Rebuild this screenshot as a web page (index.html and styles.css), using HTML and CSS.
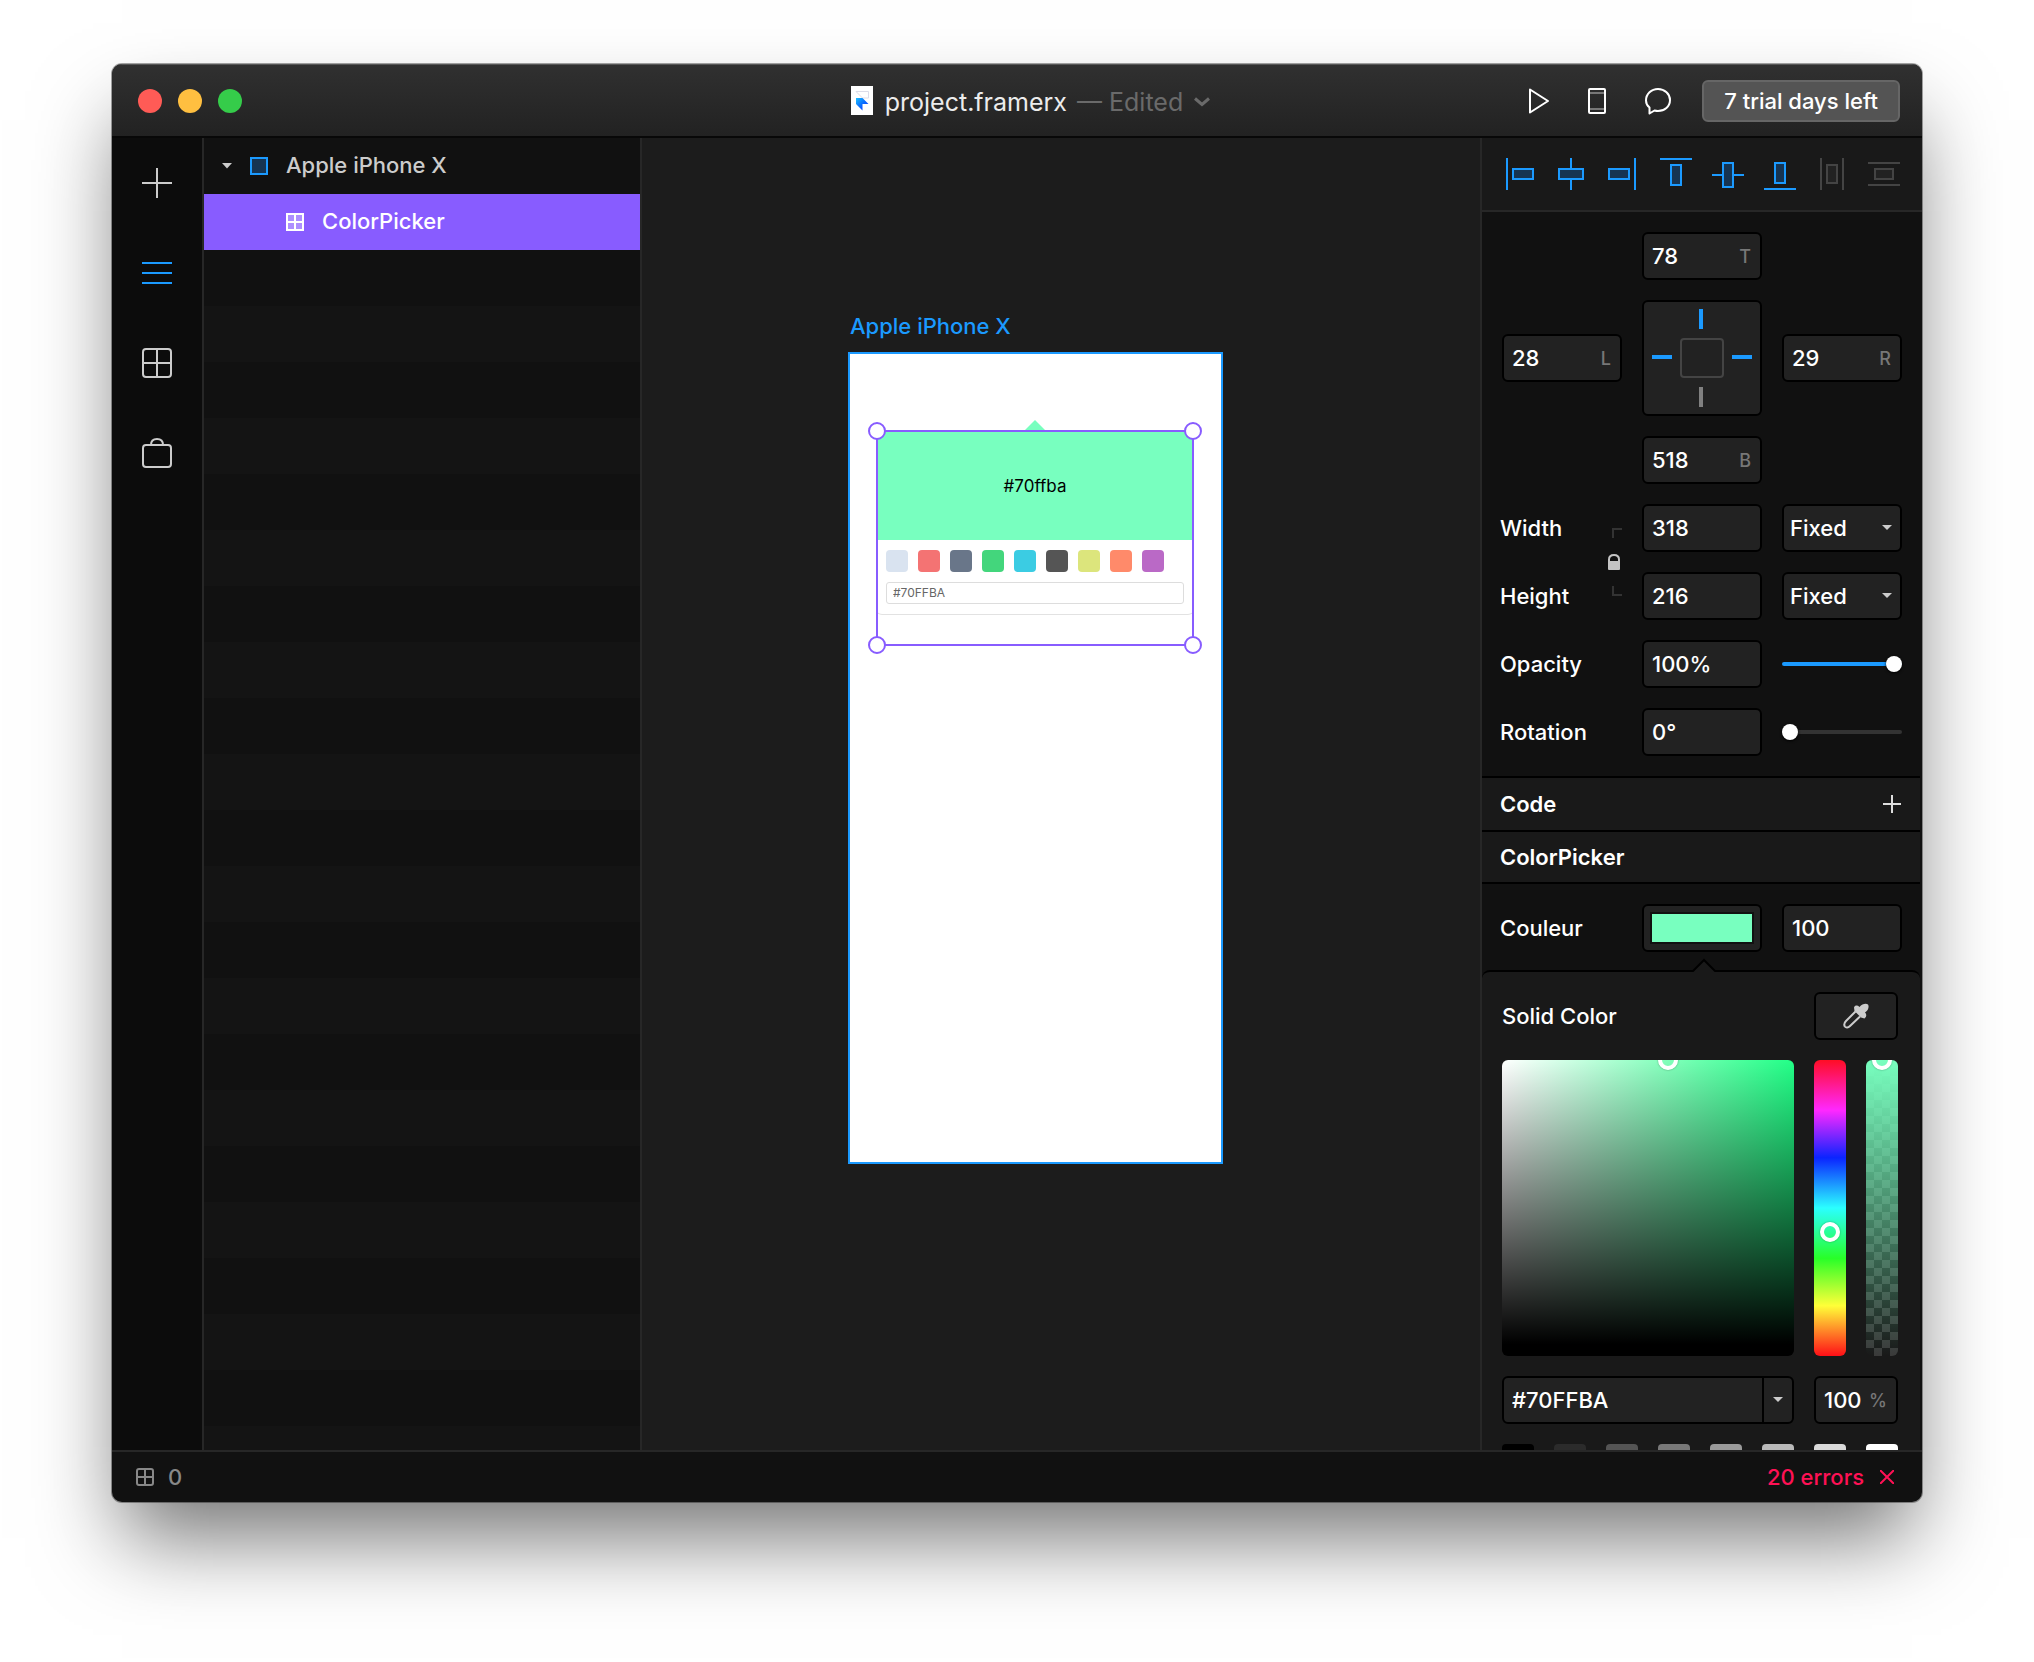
FILE: index.html
```html
<!DOCTYPE html>
<html lang="en">
<head>
<meta charset="utf-8">
<title>project.framerx</title>
<link rel="stylesheet" href="styles.css">
</head>
<body>
<div class="window">
  <header class="titlebar">
    <div class="traffic">
      <button class="light light-close" aria-label="Close"></button>
      <button class="light light-min" aria-label="Minimize"></button>
      <button class="light light-max" aria-label="Zoom"></button>
    </div>
    <div class="doc">
      <svg class="doc-icon" width="22" height="29" viewBox="0 0 22 29" aria-hidden="true">
        <defs><linearGradient id="doc-blue" x1="0" y1="0" x2="1" y2="1"><stop offset="0" stop-color="#1cc0ff"/><stop offset="0.5" stop-color="#0a6cff"/><stop offset="1" stop-color="#1a2cff"/></linearGradient></defs>
        <rect width="22" height="29" fill="#fff"/>
        <path d="M5 5.500H17.500V12H11.500Z" fill="#fff" stroke="#dcdce8"/>
        <path d="M5 12H11.500L17.500 18H11.500V24.500L5 18Z" fill="url(#doc-blue)"/>
      </svg>
      <h1 class="doc-name">project.framerx</h1>
      <button class="doc-state">— Edited
        <svg width="18" height="10" viewBox="0 0 18 10" fill="none" stroke="currentColor" stroke-width="3" aria-hidden="true"><path d="M2 1.500L9 7.500L16 1.500"/></svg>
      </button>
    </div>
    <div class="actions">
      <button class="icon-btn" aria-label="Preview"><svg width="22" height="28" viewBox="0 0 22 28" fill="none" stroke="#fff" stroke-width="2" stroke-linejoin="round"><path d="M2 2.500L20 14L2 25.500Z"/></svg></button>
      <button class="icon-btn" aria-label="Device"><svg width="18" height="28" viewBox="0 0 18 28" fill="none"><path d="M2 6H16M2 22H16" stroke="#777" stroke-width="2"/><rect x="1" y="2" width="16" height="24" rx="1" stroke="#fff" stroke-width="2"/></svg></button>
      <button class="icon-btn" aria-label="Comments"><svg width="28" height="28" viewBox="0 0 28 28" fill="none" stroke="#fff" stroke-width="2" stroke-linejoin="round"><path d="M5.500 26.500V20.500C3 18.500 2 16 2 13.500C2 7 7.300 2 14 2S26 7 26 13C26 19.500 20.500 24 14 24C12.500 24 11.500 23.800 10.500 23.500Z"/></svg></button>
      <button class="trial">7 trial days left</button>
    </div>
  </header>

  <main class="body">
    <nav class="tools">
      <button class="tool" aria-label="Insert"><svg width="30" height="30" viewBox="0 0 30 30" fill="none" stroke="currentColor" stroke-width="2"><path d="M15 0V30M0 15H30"/></svg></button>
      <button class="tool tool-on" aria-label="Layers"><svg width="30" height="30" viewBox="0 0 30 30" fill="none" stroke="currentColor" stroke-width="2"><path d="M0 5H30M0 15H30M0 25H30"/></svg></button>
      <button class="tool" aria-label="Components"><svg width="30" height="30" viewBox="0 0 30 30" fill="none" stroke="currentColor" stroke-width="2"><rect x="1" y="1" width="28" height="28" rx="3"/><path d="M15 1V29M1 15H29"/></svg></button>
      <button class="tool" aria-label="Store"><svg width="30" height="30" viewBox="0 0 30 30" fill="none" stroke="currentColor" stroke-width="2"><rect x="1" y="7" width="28" height="22" rx="3"/><path d="M9 7C9 3 11.500 1 15 1S21 3 21 7"/></svg></button>
    </nav>

    <aside class="layers">
      <ul class="layer-list">
        <li class="layer">
          <svg width="10" height="6" viewBox="0 0 10 6" fill="#ccc" aria-hidden="true"><path d="M0 0H10L5 5.500Z"/></svg>
          <svg width="18" height="18" viewBox="0 0 18 18" aria-hidden="true"><rect x="1" y="1" width="16" height="16" fill="#163452" stroke="#1b9aff" stroke-width="2"/></svg>
          <span>Apple iPhone X</span>
        </li>
        <li class="layer layer-child">
          <svg width="18" height="18" viewBox="0 0 18 18" fill="none" stroke="#fff" stroke-width="2" aria-hidden="true"><rect x="1" y="1" width="16" height="16" fill="#ad8fff"/><path d="M9 1V17M1 9H17"/></svg>
          <span>ColorPicker</span>
        </li>
      </ul>
    </aside>

    <section class="canvas" aria-label="Canvas">
      <div class="frame-group">
        <div class="frame-name">Apple iPhone X</div>
        <div class="frame">
          <div class="component">
            <div class="pointer"></div>
            <div class="card">
              <div class="card-head">#70ffba</div>
              <div class="card-body">
                <div class="chips">
                  <span class="chip" style="background:#d9e3f0"></span>
                  <span class="chip" style="background:#f47373"></span>
                  <span class="chip" style="background:#697689"></span>
                  <span class="chip" style="background:#43d67c"></span>
                  <span class="chip" style="background:#3bcce3"></span>
                  <span class="chip" style="background:#555555"></span>
                  <span class="chip" style="background:#dce57c"></span>
                  <span class="chip" style="background:#ff8a6a"></span>
                  <span class="chip" style="background:#ba69c6"></span>
                </div>
                <input class="card-input" type="text" value="#70FFBA" aria-label="Hex value">
              </div>
            </div>
            <div class="selection">
              <i class="handle h-tl"></i><i class="handle h-tr"></i><i class="handle h-bl"></i><i class="handle h-br"></i>
            </div>
          </div>
        </div>
      </div>
    </section>

    <aside class="inspector">
      <div class="align">
        <button class="align-btn" aria-label="Align left"><svg width="32" height="32" viewBox="0 0 32 32"><path d="M3 0V32"/><rect x="9" y="11" width="20" height="10"/></svg></button>
        <button class="align-btn" aria-label="Align center"><svg width="32" height="32" viewBox="0 0 32 32"><path d="M15 0V32"/><rect x="3" y="11" width="24" height="10"/></svg></button>
        <button class="align-btn" aria-label="Align right"><svg width="32" height="32" viewBox="0 0 32 32"><path d="M27 0V32"/><rect x="1" y="11" width="20" height="10"/></svg></button>
        <button class="align-btn" aria-label="Align top"><svg width="32" height="32" viewBox="0 0 32 32"><path d="M0 1H32"/><rect x="11" y="7" width="10" height="20"/></svg></button>
        <button class="align-btn" aria-label="Align middle"><svg width="32" height="32" viewBox="0 0 32 32"><path d="M0 17H32"/><rect x="11" y="5" width="10" height="24"/></svg></button>
        <button class="align-btn" aria-label="Align bottom"><svg width="32" height="32" viewBox="0 0 32 32"><path d="M0 31H32"/><rect x="11" y="5" width="10" height="20"/></svg></button>
        <button class="align-btn" disabled aria-label="Distribute horizontally"><svg width="32" height="32" viewBox="0 0 32 32"><path d="M5 0V32M27 0V32"/><rect x="11" y="7" width="10" height="18"/></svg></button>
        <button class="align-btn" disabled aria-label="Distribute vertically"><svg width="32" height="32" viewBox="0 0 32 32"><path d="M0 5H32M0 27H32"/><rect x="7" y="11" width="18" height="10"/></svg></button>
      </div>

      <div class="section">
        <div class="grid">
          <label class="field col-2"><input type="text" value="78"><span class="unit">T</span></label>
          <label class="field col-1"><input type="text" value="28"><span class="unit">L</span></label>
          <button class="pins" aria-label="Constraints">
            <svg width="100" height="100" viewBox="0 0 100 100" fill="none" aria-hidden="true">
              <path d="M49 1V21M0 49H20M80 49H100" stroke="#1b9aff" stroke-width="4"/>
              <path d="M49 79V99" stroke="#808080" stroke-width="4"/>
              <rect x="29" y="31" width="42" height="38" rx="3" stroke="#444" stroke-width="2"/>
            </svg>
          </button>
          <label class="field"><input type="text" value="29"><span class="unit">R</span></label>
          <label class="field col-2"><input type="text" value="518"><span class="unit">B</span></label>
        </div>
        <div class="grid">
          <div class="size-names">
            <label class="name" for="w">Width</label>
            <label class="name" for="h">Height</label>
            <button class="lock" aria-label="Lock ratio">
              <svg width="14" height="68" viewBox="0 0 14 68" fill="none" aria-hidden="true">
                <path d="M14 1H5V10M5 58V67H14" stroke="#333" stroke-width="2"/>
                <path d="M1 34V31.500C1 28.500 3 27 6 27S11 28.500 11 31.500V34" stroke="#c4c4c4" stroke-width="2"/>
                <rect y="33" width="12" height="9" rx="1" fill="#c4c4c4"/>
              </svg>
            </button>
          </div>
          <div class="field"><input id="w" type="text" value="318"></div>
          <div class="select"><select aria-label="Width mode"><option>Fixed</option></select><svg width="10" height="6" viewBox="0 0 10 6" fill="#ccc" aria-hidden="true"><path d="M0 0H10L5 5Z"/></svg></div>
          <div class="field"><input id="h" type="text" value="216"></div>
          <div class="select"><select aria-label="Height mode"><option>Fixed</option></select><svg width="10" height="6" viewBox="0 0 10 6" fill="#ccc" aria-hidden="true"><path d="M0 0H10L5 5Z"/></svg></div>
          <label class="name" for="o">Opacity</label>
          <div class="field"><input id="o" type="text" value="100%"></div>
          <input class="slider slider-on" type="range" min="0" max="100" value="100" aria-label="Opacity">
          <label class="name" for="r">Rotation</label>
          <div class="field"><input id="r" type="text" value="0°"></div>
          <input class="slider" type="range" min="0" max="360" value="0" aria-label="Rotation">
        </div>
      </div>

      <div class="heading">
        <h2>Code</h2>
        <button class="add" aria-label="Add code"><svg width="18" height="18" viewBox="0 0 18 18" stroke="#ddd" stroke-width="2"><path d="M9 0V18M0 9H18"/></svg></button>
      </div>
      <div class="heading heading-last"><h2>ColorPicker</h2></div>

      <div class="section section-color">
        <div class="grid">
          <label class="name" for="c">Couleur</label>
          <input class="swatch" id="c" type="color" value="#78ffbf">
          <div class="field"><input type="text" value="100" aria-label="Couleur opacity"></div>
        </div>
      </div>

      <div class="popover">
        <svg class="popover-arrow" width="28" height="14" viewBox="0 0 28 14" aria-hidden="true"><path d="M2 14L14 2L26 14" fill="#191919" stroke="#000" stroke-width="2"/></svg>
        <div class="picker">
          <div class="solid">Solid Color</div>
          <button class="dropper" aria-label="Pick colour">
            <svg width="26" height="26" viewBox="0 0 26 26" aria-hidden="true">
              <path d="M12.500 8.500L3 18C1 20 1 22 1.800 23.500C3 25 5 25 7 23L17 13.500" fill="none" stroke="#ccc" stroke-width="2"/>
              <path d="M11 4.500C12 2 14.500 2 16.500 4C19 1 23 0 25 1.500C26.500 4 25 7.500 22 9.500C24 11.500 23.500 14 21.500 15.500L18 14.500L11.500 8Z" fill="#ccc"/>
            </svg>
          </button>
          <div class="shade"><span class="ring"></span></div>
          <div class="track hue"><input type="range" min="0" max="360" value="151" aria-label="Hue"></div>
          <div class="track alpha"><input type="range" min="0" max="100" value="100" aria-label="Alpha"></div>
          <div class="field hex"><input type="text" value="#70FFBA" aria-label="Hex"><button class="hex-menu" aria-label="Colour format"><svg width="10" height="6" viewBox="0 0 10 6" fill="#ccc" aria-hidden="true"><path d="M0 0H10L5 5Z"/></svg></button></div>
          <label class="field percent"><input type="text" value="100"><span class="unit">%</span></label>
          <div class="presets">
            <button class="preset" style="background:#000" aria-label="Black"></button>
            <button class="preset" style="background:#2b2b2b" aria-label="Grey 1"></button>
            <button class="preset" style="background:#545454" aria-label="Grey 2"></button>
            <button class="preset" style="background:#787878" aria-label="Grey 3"></button>
            <button class="preset" style="background:#9a9a9a" aria-label="Grey 4"></button>
            <button class="preset" style="background:#bababa" aria-label="Grey 5"></button>
            <button class="preset" style="background:#dadada" aria-label="Grey 6"></button>
            <button class="preset" style="background:#fff" aria-label="White"></button>
          </div>
        </div>
      </div>
    </aside>
  </main>

  <footer class="status">
    <div class="count">
      <svg width="18" height="18" viewBox="0 0 18 18" fill="none" stroke="#888" stroke-width="2" aria-hidden="true"><rect x="1" y="1" width="16" height="16" rx="2"/><path d="M9 1V17M1 9H17"/></svg>
      <span>0</span>
    </div>
    <button class="errors">20 errors
      <svg width="14" height="14" viewBox="0 0 14 14" stroke="currentColor" stroke-width="2" aria-hidden="true"><path d="M0 0L14 14M14 0L0 14"/></svg>
    </button>
  </footer>
</div>
</body>
</html>
```
FILE: styles.css
```css
* { box-sizing: border-box; }

:root {
  --blue: #1b9aff;
  --purple: #885cff;
  --green: #78ffbf;
  --line: #272727;
  --panel: #111;
  --raised: #191919;
  --input: #222;
}

body {
  min-height: 100vh;
  margin: 0;
  padding: 64px 112px 0;
  background: #fff;
  color: #fff;
  font: 500 22px/28px Inter, "Liberation Sans", sans-serif;
}

button, input, select {
  margin: 0;
  padding: 0;
  border: 0;
  background: none;
  color: inherit;
  font: inherit;
}

svg { display: block; flex: none; }

.window {
  display: flex;
  flex-direction: column;
  height: calc(100vh - 224px);
  overflow: hidden;
  border-radius: 10px;
  background: var(--panel);
  box-shadow: 0 0 0 1px rgba(0, 0, 0, .35), 0 46px 80px -10px rgba(0, 0, 0, .54);
}

/* Title bar */
.titlebar {
  display: grid;
  grid-template-columns: 1fr auto 1fr;
  align-items: center;
  flex: none;
  height: 74px;
  padding: 0 22px 0 26px;
  border-top: 1px solid #565656;
  border-bottom: 2px solid #080808;
  background: linear-gradient(#303030, #222);
}

.traffic { display: flex; gap: 16px; }
.light { width: 24px; height: 24px; border-radius: 50%; }
.light-close { background: #ff5b56; }
.light-min { background: #ffbf40; }
.light-max { background: #35cc4a; }

.doc { display: flex; align-items: center; gap: 10px; padding-left: 24px; line-height: 32px; }
.doc-icon { margin-right: 2px; }
.doc-name { margin: 0; padding-top: 2px; font-size: 25px; font-weight: 400; color: #ececec; }
.doc-state { display: flex; align-items: center; gap: 10px; padding-top: 2px; font-size: 25px; font-weight: 400; color: #6a6a6a; }

.actions { display: flex; align-items: center; justify-content: flex-end; gap: 38px; }
.icon-btn { display: flex; }
.trial {
  height: 42px;
  margin-left: -8px;
  padding: 0 20px;
  border: 2px solid #666;
  border-radius: 6px;
  background: #545454;
}

/* Main columns */
.body {
  display: grid;
  grid-template-columns: 92px 438px minmax(0, 1fr) 442px;
  flex: 1;
  min-height: 0;
}

.tools { display: flex; flex-direction: column; border-right: 2px solid var(--line); background: #0c0c0c; }
.tool { display: flex; align-items: center; justify-content: center; height: 90px; color: #ccc; }
.tool-on { color: var(--blue); }

.layers {
  border-right: 2px solid var(--line);
  background: repeating-linear-gradient(#111 0 56px, #141414 56px 112px);
}
.layer-list { margin: 0; padding: 0; list-style: none; }
.layer { display: flex; align-items: center; gap: 18px; height: 56px; padding-left: 18px; color: #ccc; }
.layer span { padding-bottom: 2px; }
.layer-child { padding-left: 82px; background: var(--purple); color: #fff; }

/* Canvas */
.canvas { position: relative; overflow: hidden; background: #1c1c1c; }
.frame-group { position: absolute; top: 174px; left: 206px; }
.frame-name { padding: 0 2px; margin-bottom: 12px; color: var(--blue); }
.frame { position: relative; width: 375px; height: 812px; border: 2px solid var(--blue); background: #fff; }
.component { position: absolute; top: 76px; left: 26px; width: 318px; height: 216px; }
.pointer {
  position: absolute;
  top: -10px;
  left: 149px;
  border: 10px solid transparent;
  border-top: 0;
  border-bottom-color: var(--green);
}
.card { border-bottom: 1px solid #e2e2e2; border-radius: 6px; }
.card-head {
  display: flex;
  align-items: center;
  justify-content: center;
  height: 110px;
  padding-top: 2px;
  background: var(--green);
  color: #000;
  font-size: 17px;
  font-weight: 400;
}
.card-body { padding: 10px; }
.chips { display: flex; gap: 10px; margin-bottom: 10px; }
.chip { width: 22px; height: 22px; border-radius: 4px; }
.card-input {
  display: block;
  width: 100%;
  height: 22px;
  padding: 0 6px;
  border: 1px solid #ddd;
  border-radius: 3px;
  color: #666;
  font-size: 12px;
  font-weight: 400;
}
.selection { position: absolute; inset: 0; border: 2px solid var(--purple); }
.handle { position: absolute; width: 18px; height: 18px; border: 2px solid var(--purple); border-radius: 50%; background: #fff; }
.h-tl { top: -10px; left: -10px; }
.h-tr { top: -10px; right: -10px; }
.h-bl { bottom: -10px; left: -10px; }
.h-br { bottom: -10px; right: -10px; }

/* Inspector */
.inspector { overflow: hidden; border-left: 2px solid var(--line); background: var(--panel); }
.align {
  display: flex;
  justify-content: space-between;
  padding: 20px 22px;
  border-bottom: 2px solid var(--line);
  background: var(--raised);
}
.align-btn { fill: #163452; stroke: var(--blue); stroke-width: 2px; }
.align-btn:disabled { fill: #222; stroke: #444; }

.section { display: flex; flex-direction: column; gap: 20px; padding: 20px; }
.grid { display: grid; grid-template-columns: repeat(3, minmax(0, 1fr)); align-items: center; gap: 20px; }
.col-1 { grid-column: 1; }
.col-2 { grid-column: 2; }

.name { margin-left: -2px; }
.size-names {
  display: grid;
  grid-row: span 2;
  grid-template-columns: 1fr auto;
  grid-template-rows: 48px 48px;
  row-gap: 20px;
  align-items: center;
}
.size-names .name { grid-column: 1; }
.lock { grid-area: 1 / 2 / span 2; }

.field {
  display: flex;
  align-items: center;
  height: 48px;
  border: 2px solid #000;
  border-radius: 6px;
  background: var(--input);
}
.field input { flex: 1; min-width: 0; height: 100%; padding: 0 8px; outline: 0; }
.unit { padding: 2px 9px 0 0; color: #777; font-size: 18px; }
.pins {
  display: flex;
  align-items: center;
  justify-content: center;
  height: 116px;
  border: 2px solid #000;
  border-radius: 6px;
  background: var(--input);
}

.select { position: relative; display: flex; align-items: center; }
.select select {
  appearance: none;
  width: 100%;
  height: 48px;
  padding: 0 6px;
  border: 2px solid #000;
  border-radius: 6px;
  background: var(--input);
}
.select svg { position: absolute; right: 10px; pointer-events: none; }

.slider { appearance: none; width: 100%; height: 16px; }
.slider::-webkit-slider-runnable-track { height: 4px; border-radius: 2px; background: #333; }
.slider-on::-webkit-slider-runnable-track { background: var(--blue); }
.slider::-webkit-slider-thumb {
  appearance: none;
  width: 16px;
  height: 16px;
  margin-top: -6px;
  border-radius: 50%;
  background: #fff;
  box-shadow: 0 1px 3px #000;
}

.heading {
  display: flex;
  align-items: center;
  justify-content: space-between;
  height: 54px;
  margin-right: 2px;
  padding: 0 19px 0 18px;
  border-top: 2px solid #000;
  background: var(--raised);
}
.heading-last { border-bottom: 2px solid #000; }
.heading h2 { margin: 0; font-size: 22px; font-weight: 600; }
.add { display: flex; }

.section-color { padding-bottom: 18px; }
.swatch { appearance: none; width: 100%; height: 48px; padding: 6px; border: 2px solid #000; border-radius: 6px; background: var(--input); }
.swatch::-webkit-color-swatch-wrapper { padding: 0; }
.swatch::-webkit-color-swatch { border: 2px solid #111; border-radius: 0; }

/* Colour popover */
.popover {
  position: relative;
  margin-right: 2px;
  padding: 20px 22px 20px 20px;
  border-top: 2px solid #000;
  border-radius: 8px 8px 0 0;
  background: var(--raised);
}
.popover-arrow { position: absolute; top: -14px; left: 208px; }
.picker { display: grid; grid-template-columns: minmax(0, 1fr) 32px 32px; align-items: center; gap: 20px; }
.dropper {
  display: flex;
  grid-column: span 2;
  align-items: center;
  justify-content: center;
  height: 48px;
  border: 2px solid #000;
  border-radius: 6px;
  background: var(--input);
}
.shade {
  position: relative;
  height: 296px;
  overflow: hidden;
  border-radius: 6px;
  background: linear-gradient(transparent, #000 96%), linear-gradient(to right, #fff, #22ff87);
}
.ring {
  position: absolute;
  top: -10px;
  left: 156px;
  width: 20px;
  height: 20px;
  border: 4px solid #fff;
  border-radius: 50%;
  box-shadow: 0 0 2px rgba(0, 0, 0, .4);
}
.track { height: 296px; overflow: hidden; border-radius: 6px; }
.hue { background: linear-gradient(#ff0d25, #ff28ff 17%, #0b24ff 33%, #2bffff 50%, #28ff28 67%, #ffff38 83%, #ff0f17); }
.alpha {
  background:
    linear-gradient(var(--green), transparent),
    repeating-conic-gradient(#3a3a3a 0 25%, #191919 0 50%) 0 0 / 16px 16px;
}
.track input {
  appearance: none;
  display: block;
  width: 32px;
  height: 316px;
  margin: -10px 0;
  writing-mode: vertical-lr;
  direction: rtl;
}
.track input::-webkit-slider-thumb {
  appearance: none;
  width: 20px;
  height: 20px;
  border: 4px solid #fff;
  border-radius: 50%;
  box-shadow: 0 0 2px rgba(0, 0, 0, .4);
}
.hex-menu { display: flex; align-items: center; justify-content: center; width: 30px; height: 100%; border-left: 2px solid #000; }
.percent { grid-column: span 2; }
.percent input { padding-right: 0; }
.presets { display: flex; grid-column: 1 / -1; justify-content: space-between; }
.preset { width: 32px; height: 32px; border-radius: 4px; }

/* Status bar */
.status {
  display: flex;
  align-items: center;
  justify-content: space-between;
  flex: none;
  height: 52px;
  padding: 0 28px 0 24px;
  border-top: 2px solid var(--line);
}
.count { display: flex; align-items: center; gap: 14px; color: #888; }
.errors { display: flex; align-items: center; gap: 16px; color: #ff1155; }
```
